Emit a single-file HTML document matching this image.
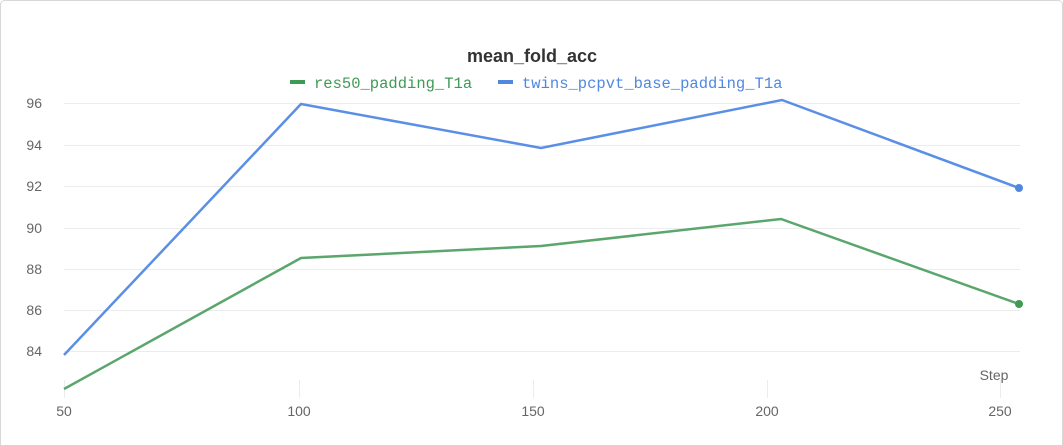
<!DOCTYPE html><html><head><style>html,body{margin:0;padding:0;background:#fff;width:1063px;height:445px;overflow:hidden}</style></head><body>
<svg width="1063" height="445" xmlns="http://www.w3.org/2000/svg" style="position:absolute;left:0;top:0">
<rect x="0.5" y="0.5" width="1062" height="460" rx="4" fill="#fff" stroke="#d8d8d8"/>
<g stroke="#ececec" stroke-width="1">
<line x1="64" y1="103.5" x2="1020" y2="103.5"/><line x1="64" y1="145.5" x2="1020" y2="145.5"/><line x1="64" y1="186.5" x2="1020" y2="186.5"/><line x1="64" y1="228.5" x2="1020" y2="228.5"/><line x1="64" y1="269.5" x2="1020" y2="269.5"/><line x1="64" y1="310.5" x2="1020" y2="310.5"/><line x1="64" y1="351.5" x2="1020" y2="351.5"/>
<line x1="64.5" y1="380" x2="64.5" y2="398"/><line x1="299.5" y1="380" x2="299.5" y2="398"/><line x1="533.5" y1="380" x2="533.5" y2="398"/><line x1="767.5" y1="380" x2="767.5" y2="398"/><line x1="1000.5" y1="380" x2="1000.5" y2="398"/>
</g>
<g font-family="Liberation Sans Narrow, Liberation Sans, sans-serif" font-size="14" fill="#666" text-anchor="end">
<text x="42" y="108">96</text><text x="42" y="150">94</text><text x="42" y="191">92</text><text x="42" y="233">90</text><text x="42" y="274">88</text><text x="42" y="315">86</text><text x="42" y="356">84</text>
</g>
<g font-family="Liberation Sans Narrow, Liberation Sans, sans-serif" font-size="14" fill="#666" text-anchor="middle">
<text x="64" y="416">50</text><text x="299" y="416">100</text><text x="533" y="416">150</text><text x="767" y="416">200</text><text x="1000" y="416">250</text>
<text x="994" y="380">Step</text>
</g>
<text x="532" y="62" text-anchor="middle" font-family="Liberation Sans, sans-serif" font-weight="bold" font-size="18" fill="#333">mean_fold_acc</text>
<rect x="290" y="80" width="15" height="4" fill="#3f9a55"/>
<text x="314" y="88" font-family="Liberation Mono, monospace" font-size="15.5" fill="#3f9a55">res50_padding_T1a</text>
<rect x="498" y="80" width="15" height="4" fill="#5088e0"/>
<text x="522" y="88" font-family="Liberation Mono, monospace" font-size="15.5" fill="#5088e0">twins_pcpvt_base_padding_T1a</text>
<polyline points="64,389 301,258 541,246 781,219 1019,304" fill="none" stroke="#5aa66d" stroke-width="2.5"/>
<polyline points="64,355 301,104 541,148 782,100 1019,188" fill="none" stroke="#5b8fe6" stroke-width="2.5"/>
<circle cx="1019" cy="304" r="4" fill="#3f9a55"/>
<circle cx="1019" cy="188" r="4" fill="#5088e0"/>
</svg>
</body></html>
